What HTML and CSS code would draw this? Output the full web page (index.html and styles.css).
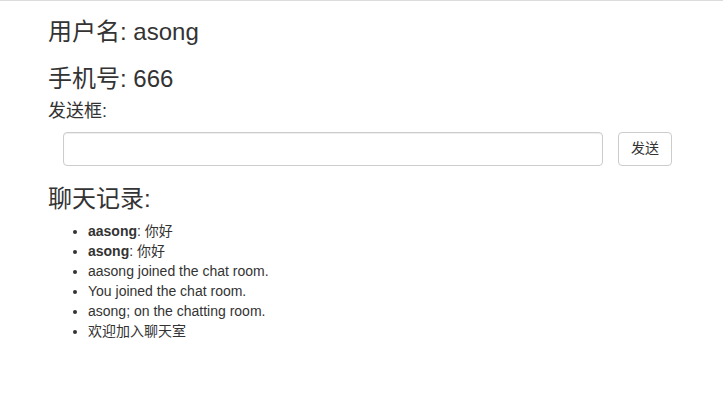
FILE: index.html
```html
<!DOCTYPE html>
<html lang="zh-CN">
<head>
<meta charset="utf-8">
<title>聊天室</title>
<link rel="stylesheet" href="styles.css">
</head>
<body>
<div class="page">
  <h3 class="title first">用户名: asong</h3>
  <h3 class="title">手机号: 666</h3>
  <h4 class="label">发送框:</h4>
  <form class="send-row">
    <input class="send-input" type="text">
    <button class="send-btn" type="button">发送</button>
  </form>
  <h3 class="title">聊天记录:</h3>
  <ul class="messages">
    <li><b>aasong</b>: 你好</li>
    <li><b>asong</b>: 你好</li>
    <li>aasong joined the chat room.</li>
    <li>You joined the chat room.</li>
    <li>asong; on the chatting room.</li>
    <li>欢迎加入聊天室</li>
  </ul>
</div>
</body>
</html>
```

FILE: styles.css
```css
html, body {
  margin: 0;
  padding: 0;
}
body {
  background: #fff;
  color: #333;
  font-family: "Liberation Sans", Arial, "Noto Sans CJK SC", sans-serif;
  font-size: 14px;
  line-height: 1.42857;
  border-top: 1px solid #dcdcdc;
}
.page {
  padding: 0 48px;
}
.title {
  font-size: 24px;
  font-weight: 400;
  line-height: 1.1;
  height: 26.4px;
  margin: 20px 0 10px;
}
.title.first {
  margin-top: 18.4px;
}
.label {
  font-size: 18px;
  font-weight: 400;
  line-height: 1.1;
  height: 19.8px;
  margin: 10px 0 10px;
}
.send-row {
  display: flex;
  align-items: center;
  gap: 15px;
  padding-left: 15px;
  margin: 0;
}
.send-input {
  box-sizing: border-box;
  width: 540px;
  height: 34px;
  padding: 6px 12px;
  border: 1px solid #ccc;
  border-radius: 4px;
  box-shadow: inset 0 1px 1px rgba(0,0,0,.075);
  font: inherit;
  color: #555;
  background: #fff;
  margin: 0;
}
.send-btn {
  box-sizing: border-box;
  height: 34px;
  width: 54px;
  padding: 6px 0;
  border: 1px solid #ccc;
  border-radius: 4px;
  background: #fff;
  color: #333;
  font-family: inherit;
  font-size: 14px;
  line-height: 1.42857;
  margin: 0;
  white-space: nowrap;
}
.messages {
  margin: 0 0 10px;
  padding-left: 40px;
}
.messages li {
  height: 20px;
}
.messages b {
  font-weight: bold;
}
```
